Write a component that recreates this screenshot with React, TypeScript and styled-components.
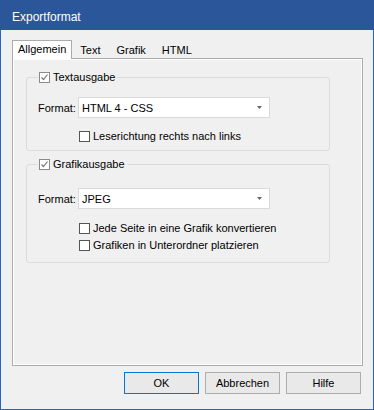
import React from 'react';
import styled, { createGlobalStyle } from 'styled-components';

const GlobalStyle = createGlobalStyle`
  html, body {
    margin: 0;
    padding: 0;
    background: #f0f0f0;
  }
  body {
    font-family: "Liberation Sans", Arial, sans-serif;
    font-size: 11px;
    color: #000;
  }
  * {
    box-sizing: border-box;
  }
`;

const Window = styled.div`
  width: 374px;
  height: 410px;
  display: flex;
  flex-direction: column;
  background: #f0f0f0;
  border: 1px solid #1f66c9;
  border-top: none;
`;

const TitleBar = styled.div`
  height: 30px;
  flex: none;
  display: flex;
  align-items: center;
  padding: 4px 0 0 12px;
  margin: 0 -1px;
  background: #2b579a;
  color: #fff;
  font-size: 12px;
`;

const Body = styled.div`
  flex: 1;
  display: flex;
  flex-direction: column;
  padding: 10px 10px 0 11px;
`;

const TabStrip = styled.div`
  display: flex;
  align-items: flex-end;
  height: 19px;
  margin-bottom: -1px;
  position: relative;
  z-index: 1;
`;

const Tab = styled.div<{ $active?: boolean }>`
  height: ${(p) => (p.$active ? 19 : 16)}px;
  line-height: ${(p) => (p.$active ? 17 : 13)}px;
  padding: ${(p) => (p.$active ? '0 5px' : '0 7px 2px')};
  background: ${(p) => (p.$active ? '#fff' : 'transparent')};
  border: 1px solid ${(p) => (p.$active ? '#acacac' : 'transparent')};
  border-bottom: none;
  white-space: nowrap;
`;

const Panel = styled.div`
  height: 308px;
  flex: none;
  border: 1px solid #acacac;
  box-shadow: inset 0 0 0 1px #fff;
  padding: 12px 0 0 13px;
`;

const Group = styled.fieldset<{ $top: number; $bottom: number }>`
  width: 304px;
  margin: 0;
  padding: ${(p) => p.$top}px 0 ${(p) => p.$bottom}px 11px;
  border: 1px solid #dcdcdc;
  border-radius: 3px;
  min-inline-size: 0;

  & + & {
    margin-top: 7px;
  }
`;

const Legend = styled.legend`
  display: flex;
  align-items: center;
  gap: 4px;
  height: 13px;
  line-height: 13px;
  padding: 0 2px 0 1px;
`;

const FormatRow = styled.div`
  display: flex;
  align-items: center;
  height: 21px;
`;

const FieldLabel = styled.span`
  width: 40px;
  flex: none;
`;

const Select = styled.div`
  width: 192px;
  height: 21px;
  display: flex;
  align-items: center;
  justify-content: space-between;
  padding: 0 7px 0 3px;
  background: #fff;
  border: 1px solid #d9d9d9;
`;

const CheckList = styled.div<{ $top: number }>`
  display: flex;
  flex-direction: column;
  gap: 4px;
  margin: ${(p) => p.$top}px 0 0 41px;
`;

const CheckRow = styled.label`
  display: flex;
  align-items: center;
  gap: 3px;
  height: 13px;
  line-height: 13px;
  white-space: nowrap;
`;

const Box = styled.span<{ $checked?: boolean }>`
  width: 11px;
  height: 11px;
  flex: none;
  display: inline-flex;
  align-items: center;
  justify-content: center;
  background: #fff;
  border: 1px solid ${(p) => (p.$checked ? '#8a8a8a' : '#555')};
`;

const ButtonRow = styled.div`
  display: flex;
  justify-content: flex-end;
  gap: 6px;
  margin: 6px 2px 0 0;
`;

const Button = styled.button<{ $default?: boolean }>`
  width: 75px;
  height: 22px;
  padding: 0;
  font: inherit;
  color: #000;
  background: #e9e9e9;
  border: 1px solid ${(p) => (p.$default ? '#0078d7' : '#adadad')};
`;

function Checkbox({ checked, children }: { checked?: boolean; children: React.ReactNode }) {
  return (
    <CheckRow>
      <Box $checked={checked}>
        {checked && (
          <svg width="9" height="9" viewBox="0 0 9 9">
            <polyline points="1.5,4.5 3.5,6.5 7.5,1.5" fill="none" stroke="#777" strokeWidth="1.2" />
          </svg>
        )}
      </Box>
      {children}
    </CheckRow>
  );
}

function Dropdown({ value }: { value: string }) {
  return (
    <Select>
      <span>{value}</span>
      <svg width="5" height="3" viewBox="0 0 5 3">
        <polygon points="0,0 5,0 2.5,3" fill="#666" />
      </svg>
    </Select>
  );
}

export default function App() {
  return (
    <Window>
      <GlobalStyle />
      <TitleBar>Exportformat</TitleBar>
      <Body>
        <TabStrip>
          <Tab $active>Allgemein</Tab>
          <Tab>Text</Tab>
          <Tab>Grafik</Tab>
          <Tab>HTML</Tab>
        </TabStrip>
        <Panel>
          <Group $top={13} $bottom={7}>
            <Legend>
              <Checkbox checked>Textausgabe</Checkbox>
            </Legend>
            <FormatRow>
              <FieldLabel>Format:</FieldLabel>
              <Dropdown value="HTML 4 - CSS" />
            </FormatRow>
            <CheckList $top={12}>
              <Checkbox>Leserichtung rechts nach links</Checkbox>
            </CheckList>
          </Group>
          <Group $top={17} $bottom={10}>
            <Legend>
              <Checkbox checked>Grafikausgabe</Checkbox>
            </Legend>
            <FormatRow>
              <FieldLabel>Format:</FieldLabel>
              <Dropdown value="JPEG" />
            </FormatRow>
            <CheckList $top={13}>
              <Checkbox>Jede Seite in eine Grafik konvertieren</Checkbox>
              <Checkbox>Grafiken in Unterordner platzieren</Checkbox>
            </CheckList>
          </Group>
        </Panel>
        <ButtonRow>
          <Button $default>OK</Button>
          <Button>Abbrechen</Button>
          <Button>Hilfe</Button>
        </ButtonRow>
      </Body>
    </Window>
  );
}
